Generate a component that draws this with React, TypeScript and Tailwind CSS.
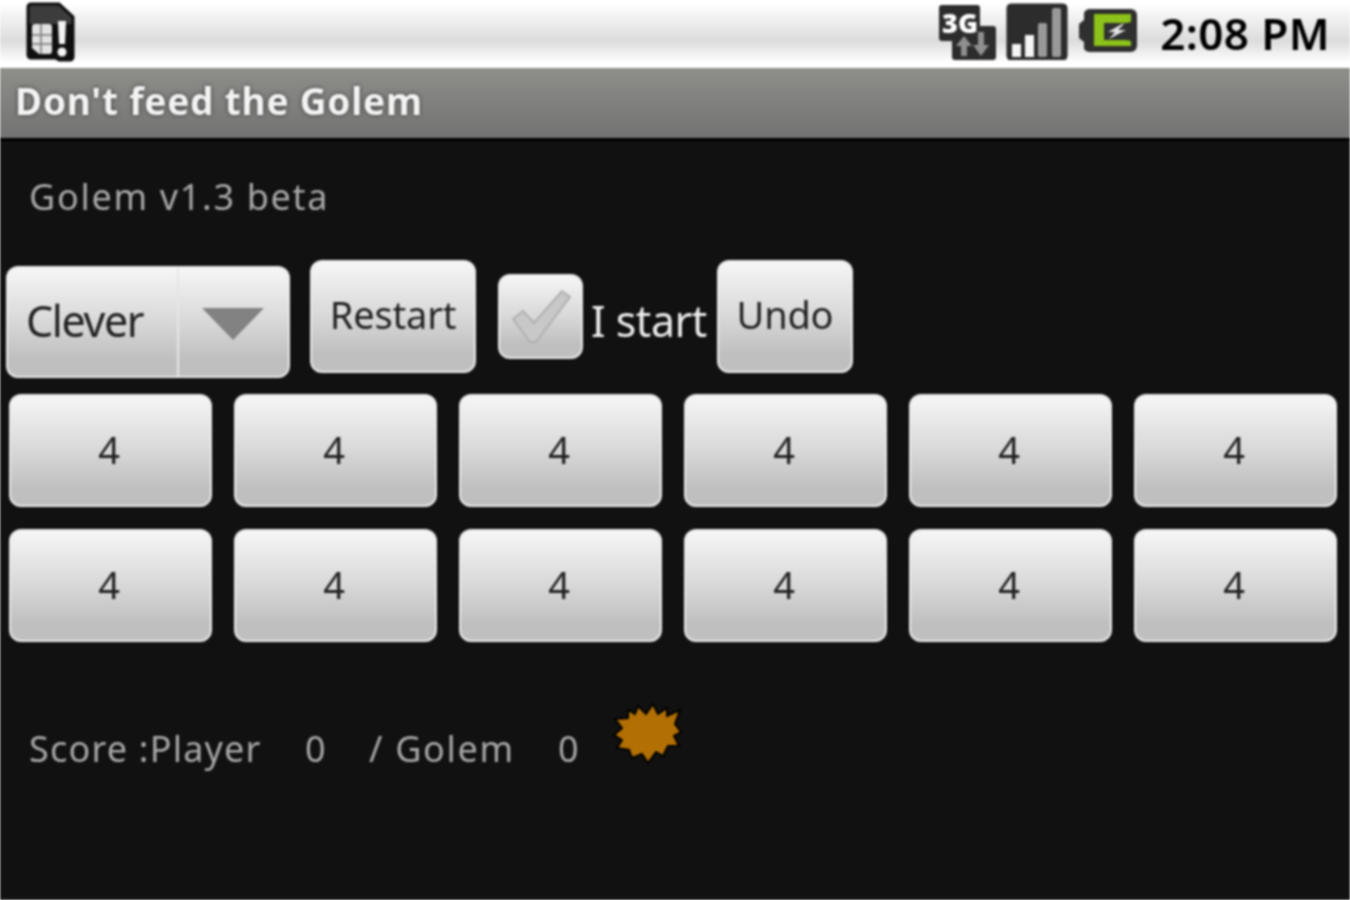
import React from "react";

const btn =
  "flex items-center justify-center rounded-[12px] border-2 border-[#e9e9e9] bg-gradient-to-b from-[#f6f6f6] via-[#d8d8d8] via-50% to-[#bfbfbf] to-85% text-[#222]";

const SimIcon = () => (
  <svg width="50" height="60" viewBox="0 0 50 60" className="mt-[2px]">
    <path d="M3 5a3 3 0 0 1 3-3h28l14 13v40a3 3 0 0 1-3 3H34l-3-2H6a3 3 0 0 1-3-3z" fill="#3c3c3c" stroke="#0c0c0c" strokeWidth="3" />
    <path d="M4 22h43v33a2 2 0 0 1-2 2H6a2 2 0 0 1-2-2z" fill="#0f0f0f" />
    <path d="M7 25a3 3 0 0 1 3-3h14a3 3 0 0 1 3 3v24a3 3 0 0 1-3 3H14l-7-6z" fill="#e2e2e2" />
    <path d="M7 33h20M7 42h20M16 22v30" stroke="#777" strokeWidth="1.500" />
    <path d="M33 19h8l-1 23h-6z" fill="#f4f4f4" />
    <circle cx="37" cy="50" r="4.500" fill="#f4f4f4" />
  </svg>
);

const NetworkIcon = () => (
  <svg width="60" height="58" viewBox="0 0 60 58">
    <path d="M2 5a3 3 0 0 1 3-3h35a3 3 0 0 1 3 3v18h13a3 3 0 0 1 3 3v28a3 3 0 0 1-3 3H18a3 3 0 0 1-3-3V38H5a3 3 0 0 1-3-3z" fill="#2c2c2c" />
    <path d="M30 38v15h-6V43h-5l8-10 8 10h-5" fill="#8f8f8f" />
    <path d="M41 29v13h-5l8 11 8-11h-5V29z" fill="#8f8f8f" />
    <text x="5" y="30" fontFamily="'Open Sans', sans-serif" fontWeight="800" fontSize="27" textLength="36" lengthAdjust="spacingAndGlyphs" fill="#fff">3G</text>
  </svg>
);

const SignalIcon = () => (
  <svg width="62" height="58" viewBox="0 0 62 58">
    <rect x="1" y="2" width="60" height="56" rx="4" fill="#2c2c2c" stroke="#222" />
    <rect x="6" y="42" width="9" height="13" fill="#f5f5f5" />
    <rect x="19" y="33" width="9" height="22" fill="#f5f5f5" />
    <rect x="32" y="21" width="9" height="34" rx="2" fill="#999999" />
    <rect x="46" y="6" width="9" height="49" rx="2" fill="#999999" />
  </svg>
);

const BatteryIcon = () => (
  <svg width="58" height="44" viewBox="0 0 58 44">
    <path d="M10 0h42a6 6 0 0 1 6 6v31a6 6 0 0 1-6 6H10a6 6 0 0 1-5-3v-7l-5-4V15l5-4V4a6 6 0 0 1 5-4z" fill="#2f2f2f" />
    <path d="M15 5h37v8l-5 1H25v17h22l5 1v5H15z" fill="#8cc21a" />
    <path d="M43 15 29 23h7l-6 7 17-9h-8l6-6z" fill="#e8e8e8" />
  </svg>
);

const Splat = () => (
  <svg width="72" height="66" viewBox="0 0 72 66">
    <polygon
      points="27,6 35,14 42,4 47,14 56,8 56,16 69,10 64,24 70,32 63,36 68,46 57,46 52,56 45,52 37,63 31,54 21,58 18,50 6,48 11,40 3,35 11,28 4,19 17,18 17,10 24,14"
      fill="#b26f04"
      stroke="#000"
      strokeWidth="2"
    />
  </svg>
);

export default function App() {
  const pits = [0, 1, 2, 3, 4, 5];

  return (
    <div className="h-[900px] w-[1350px] overflow-hidden bg-[#111111] font-['Noto_Sans','Open_Sans',sans-serif] blur-[0.8px]">
      <div className="flex h-[68px] items-start justify-between bg-gradient-to-b from-[#ffffff] from-[5%] via-[#dcdcdc] via-[60%] to-[#ffffff] to-[92%] pl-[25px] pr-[20px]">
        <SimIcon />
        <div className="flex items-start">
          <div className="mt-[3px] mr-[9px]"><NetworkIcon /></div>
          <div className="mt-[2px] mr-[11px]"><SignalIcon /></div>
          <div className="mt-[9px] mr-[23px]"><BatteryIcon /></div>
          <span className="mt-[4px] text-[44px] leading-[58px] font-semibold tracking-[0.4px] text-black">2:08 PM</span>
        </div>
      </div>

      <div className="flex h-[70px] items-center bg-gradient-to-b from-[#8e8e8a] to-[#737373] pb-[5px] pl-[15px]">
        <span className="text-[37px] leading-none font-bold tracking-[0.8px] text-[#f4f4f4] [text-shadow:0_0_4px_#333]">Don't feed the Golem</span>
      </div>
      <div className="h-[3px] bg-black" />

      <div className="pt-[31px] pl-[29px] text-[36px] leading-[50px] tracking-[1.7px] text-[#a8a8a8]">Golem v1.3 beta</div>

      <div className="mt-[38px] flex items-start pl-[6px]">
        <div className={`${btn} mt-[6px] h-[112px] w-[284px] !justify-start`}>
          <span className="w-[170px] pb-[4px] pl-[18px] text-[43px] leading-none tracking-[-1.4px]">Clever</span>
          <div className="flex h-full w-[112px] items-center justify-center border-l-2 border-[#e6e6e6]">
            <svg width="64" height="34" viewBox="0 0 64 34" className="mt-[2px]">
              <polygon points="1,2 63,2 32,34" fill="#828282" />
            </svg>
          </div>
        </div>
        <div className={`${btn} ml-[20px] h-[113px] w-[166px] pb-[5px] text-[38px] leading-none tracking-[-0.2px]`}>Restart</div>
        <div className={`${btn} mt-[14px] ml-[22px] h-[85px] w-[85px]`}>
          <svg width="62" height="56" viewBox="0 0 62 56">
            <path d="M3 30 L13 22 L24 34 L52 2 L60 8 L26 53 L20 53 Z" fill="#c8c8c8" stroke="#b0b0b0" strokeWidth="2" />
          </svg>
        </div>
        <span className="mt-[34px] ml-[8px] w-[126px] text-[43px] leading-[54px] tracking-[-0.5px] text-[#ececec]">I start</span>
        <div className={`${btn} h-[113px] w-[136px] pb-[5px] text-[38px] leading-none tracking-[-0.2px]`}>Undo</div>
      </div>

      {[0, 1].map((row) => (
        <div key={row} className={`flex gap-[22px] pl-[9px] ${row === 0 ? "mt-[16px]" : "mt-[22px]"}`}>
          {pits.map((i) => (
            <div key={i} className={`${btn} h-[113px] w-[203px] pr-[3px] pb-[3px] text-[38px] leading-none`}>4</div>
          ))}
        </div>
      ))}

      <div className="mt-[58px] flex items-start pl-[29px] text-[36px] leading-[50px] text-[#a8a8a8]">
        <span className="mt-[24px] w-[276px] tracking-[1.2px]">Score :Player</span>
        <span className="mt-[24px] w-[64px]">0</span>
        <span className="mt-[24px] w-[189px] tracking-[1.7px]">/ Golem</span>
        <span className="mt-[24px] w-[53px]">0</span>
        <Splat />
      </div>
    </div>
  );
}
